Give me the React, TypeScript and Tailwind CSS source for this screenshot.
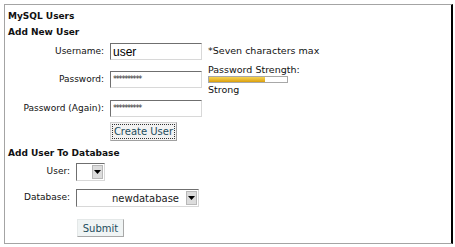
import React from 'react';

const font = { fontFamily: '"DejaVu Sans", Verdana, sans-serif' };

const Field: React.FC<{ children: React.ReactNode; w?: string }> = ({ children, w = 'w-[92px]' }) => (
  <div
    className={`${w} h-[17px] bg-white border border-t-[#6f6f6f] border-l-[#6f6f6f] border-r-[#d8d8d8] border-b-[#d8d8d8] flex items-center px-[2px]`}
  >
    {children}
  </div>
);

const Arrow = () => (
  <div className="w-[11px] h-[14px] bg-[#dcdcdc] border border-[#b8b8b8] flex items-center justify-center">
    <svg width="7" height="4" viewBox="0 0 7 4">
      <path d="M0 0h7L3.5 4z" fill="#000" />
    </svg>
  </div>
);

const Select: React.FC<{ w: string; text?: string }> = ({ w, text }) => (
  <div
    className={`${w} h-[18px] bg-white border border-t-[#6f6f6f] border-l-[#6f6f6f] border-r-[#d8d8d8] border-b-[#d8d8d8] flex items-center justify-end pr-[1px]`}
  >
    {text && <span className="text-[10px] text-[#222] mr-[7px]">{text}</span>}
    <Arrow />
  </div>
);

const Stars = () => (
  <span className="text-[8px] tracking-[-1.2px] leading-none text-[#333]">**********</span>
);

export default function App() {
  return (
    <div className="w-[455px] h-[247px] bg-white text-[#111]" style={font}>
      <div className="relative top-[4px] left-[4px] w-[449px] h-[240px] border border-[#a4a4a4] border-r-2 border-r-black pl-[3px] pt-[4px]">
        <div className="text-[9px] font-bold leading-[14px]">MySQL Users</div>
        <div className="text-[9px] font-bold leading-[14px] mt-[2px]">Add New User</div>

        <div className="grid grid-cols-[96px_92px_auto] gap-x-[6px] items-center mt-[4px] text-[9px]">
          <div className="text-right">Username:</div>
          <Field>
            <span className="text-[12px] leading-none text-black" style={{ fontFamily: '"Liberation Sans", Arial, sans-serif' }}>user</span>
          </Field>
          <div className="text-[9.5px]">*Seven characters max</div>
        </div>

        <div className="grid grid-cols-[96px_92px_auto] gap-x-[6px] items-center mt-[4px] text-[9px]">
          <div className="text-right">Password:</div>
          <Field>
            <Stars />
          </Field>
          <div className="flex flex-col text-[9.5px] leading-[11px]">
            <span>Password Strength:</span>
            <div className="w-[80px] h-[7px] border border-[#a8a8a8] bg-white my-[1px]">
              <div className="h-full w-[56px] bg-gradient-to-b from-[#f6d450] to-[#dca000]" />
            </div>
            <span>Strong</span>
          </div>
        </div>

        <div className="grid grid-cols-[96px_92px_auto] gap-x-[6px] items-center mt-[5px] text-[9px]">
          <div className="text-right">Password (Again):</div>
          <Field>
            <Stars />
          </Field>
        </div>

        <div className="ml-[102px] mt-[5px] w-[67px] h-[19px] bg-[#f2f2f2] border border-[#d0d0d0] border-r-[#a0a0a0] border-b-[#a0a0a0] p-[1px]">
          <div className="w-full h-full border border-dotted border-[#333] flex items-center justify-center text-[10px] text-[#1d4d5c]">
            Create User
          </div>
        </div>

        <div className="text-[9px] font-bold leading-[14px] mt-[5px]">Add User To Database</div>

        <div className="grid grid-cols-[62px_auto] gap-x-[6px] items-center mt-[3px] text-[9px]">
          <div className="text-right">User:</div>
          <Select w="w-[29px]" />
        </div>

        <div className="grid grid-cols-[62px_auto] gap-x-[6px] items-center mt-[8px] text-[9px]">
          <div className="text-right">Database:</div>
          <Select w="w-[123px]" text="newdatabase" />
        </div>

        <div className="ml-[69px] mt-[12px] w-[47px] h-[18px] bg-[#f0f4f4] border border-[#e4e8e8] border-r-[#a8a8a8] border-b-[#a8a8a8] flex items-center justify-center text-[10px] text-[#1d4d5c]">
          Submit
        </div>
      </div>
    </div>
  );
}
